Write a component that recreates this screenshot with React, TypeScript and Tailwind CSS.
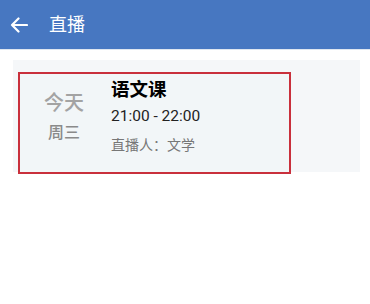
import React from 'react';

const font = { fontFamily: '"Roboto", "Noto Sans CJK SC", sans-serif' };

export default function App() {
  return (
    <div className="w-[370px] h-[304px] bg-white" style={font}>
      {/* Header */}
      <div className="h-[50px] bg-[#4777c1] flex items-center border-b border-[#dfe6f0]">
        <svg width="18" height="16" viewBox="0 0 18 16" className="ml-[10px]">
          <path d="M17 8H2M8.5 1.5L2 8l6.5 6.5" fill="none" stroke="#fff" strokeWidth="2.2" strokeLinecap="round" strokeLinejoin="round" />
        </svg>
        <span className="ml-[21px] text-[18px] text-white leading-none">直播</span>
      </div>

      {/* Card */}
      <div className="mt-[10px] ml-[13px] w-[347px] h-[112px] bg-[#f5f7f9] pt-[12px] pl-[5px]">
        <div className="w-[273px] h-[102px] border-2 border-[#c9303c] bg-[#f2f6f8] flex">
          <div className="w-[88px] flex flex-col items-center pt-[19px]">
            <span className="text-[20px] font-medium text-[#a3a3a3] leading-none">今天</span>
            <span className="mt-[12px] text-[16px] font-medium text-[#8a8a8a] leading-none">周三</span>
          </div>
          <div className="flex flex-col pt-[7px] pl-[3px]">
            <span className="text-[18.5px] font-bold text-black leading-none">语文课</span>
            <span className="mt-[9px] text-[15.5px] text-[#222] leading-none">21:00 - 22:00</span>
            <span className="mt-[14px] text-[14px] text-[#777] leading-none">直播人：文学</span>
          </div>
        </div>
      </div>
    </div>
  );
}
